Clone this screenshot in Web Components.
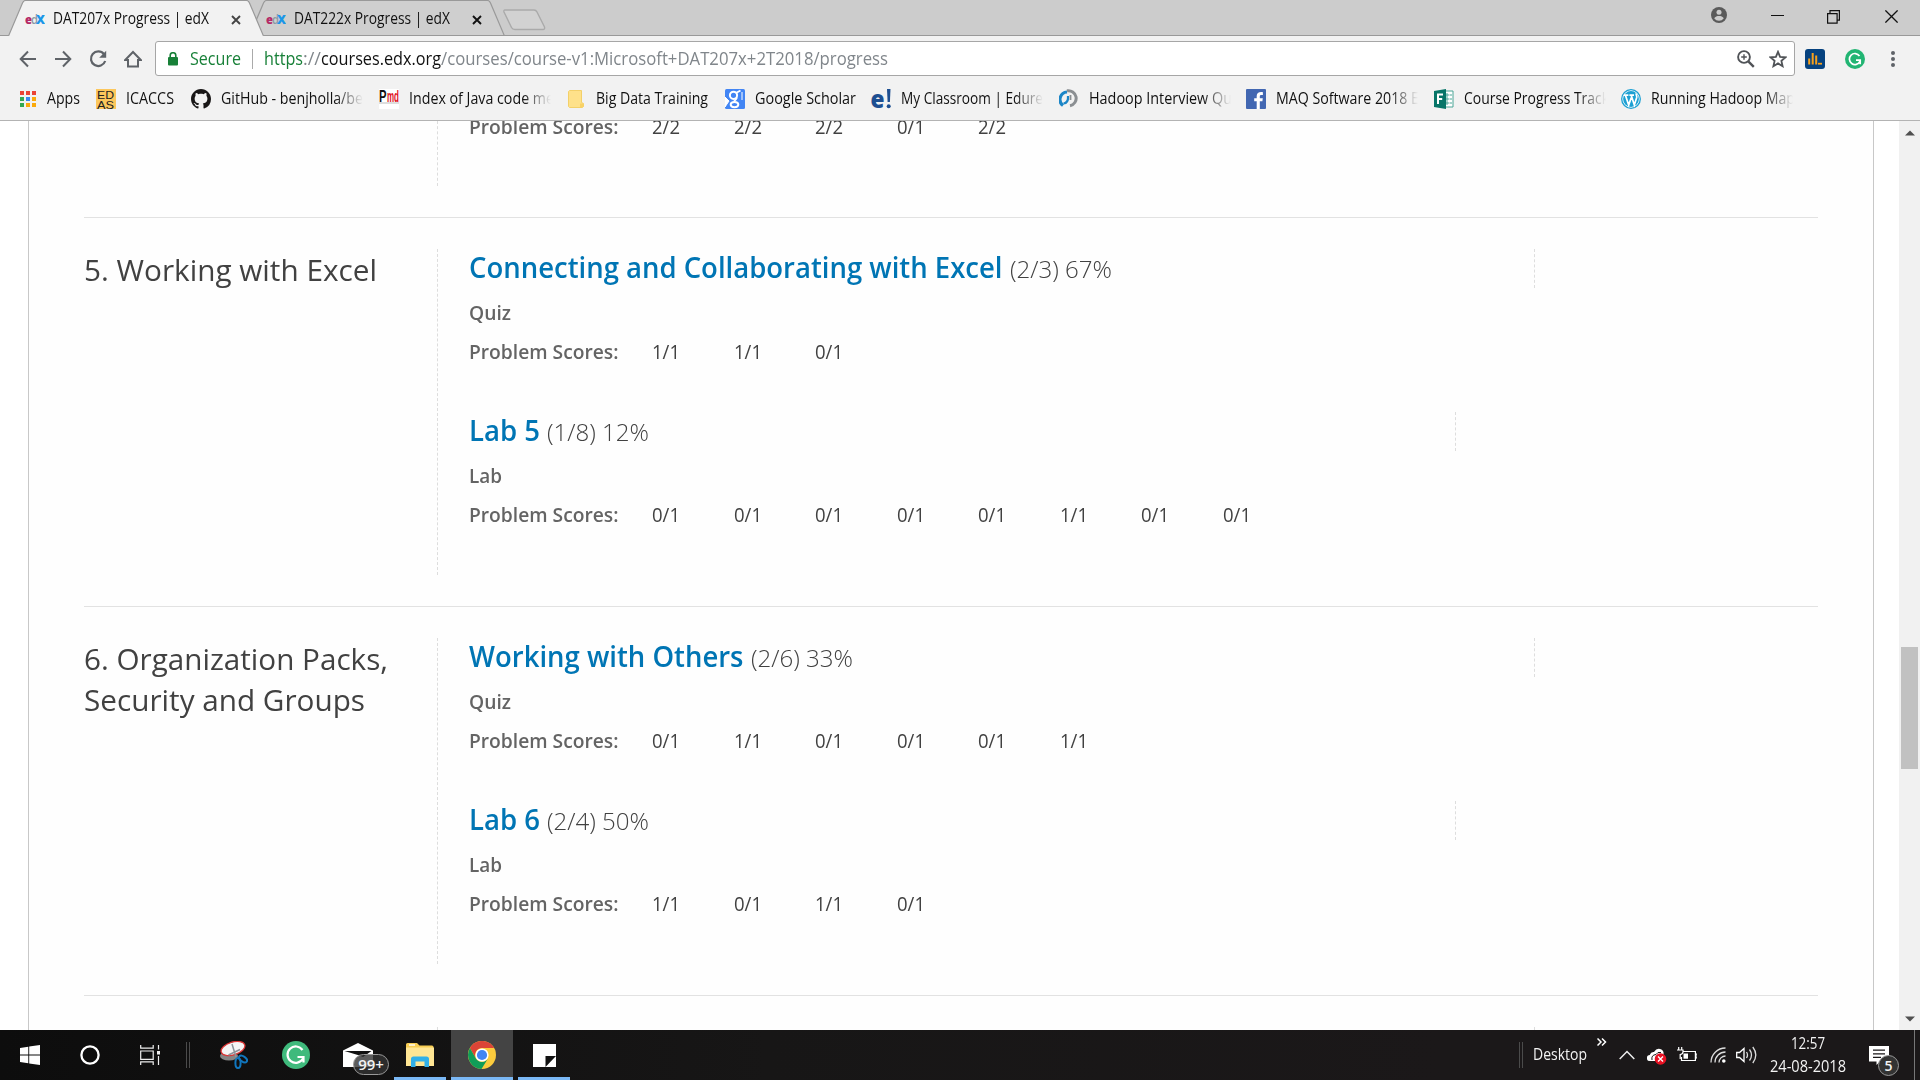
<!DOCTYPE html>
<html lang="en">
<head>
<meta charset="utf-8">
<title>DAT207x Progress | edX</title>
<style>
html,body{margin:0;height:100%;overflow:hidden;background:#fff}
body{font-family:"Open Sans","Noto Sans",sans-serif}
</style>
</head>
<body>
<app-screen></app-screen>
<script>
const make=(name,render)=>customElements.define(name,class extends HTMLElement{
  connectedCallback(){
    if(this.shadowRoot)return;
    this.attachShadow({mode:'open'}).innerHTML=render(this);
  }
});
const icons={
 edx:[20,12,`<text x="0" y="10.5" font-family="Open Sans" font-weight="800" font-size="12" fill="#b52a67" textLength="7" lengthAdjust="spacingAndGlyphs">e</text><text x="6" y="10.5" font-family="Open Sans" font-weight="600" font-size="12" fill="#8a9aa5" textLength="7" lengthAdjust="spacingAndGlyphs">d</text><text x="11" y="11" font-family="Open Sans" font-weight="800" font-size="13" fill="#1b96e8" textLength="9" lengthAdjust="spacingAndGlyphs">X</text>`],
 close:[10,10,`<path d="M1 1l8 8M9 1L1 9" stroke="currentColor" stroke-width="1.9" fill="none"/>`],
 back:[18,18,`<path d="M17 9H2M9 1.5L1.7 9 9 16.500" stroke="#5f6368" stroke-width="2" fill="none"/>`],
 fwd:[18,18,`<path d="M1 9h15M9 1.500L16.300 9 9 16.500" stroke="#5f6368" stroke-width="2" fill="none"/>`],
 reload:[18,18,`<path d="M15 4.200A7.300 7.300 0 1 0 16.200 11" stroke="#5f6368" stroke-width="2.200" fill="none"/><path d="M17.200.8v7H10.200z" fill="#5f6368"/>`],
 home:[18,18,`<path d="M1.200 10L9 2l7.800 8H14v6.500H4V10z" stroke="#5f6368" stroke-width="2" fill="none"/>`],
 lock:[10,14,`<rect y="5" width="10" height="8.500" rx="1" fill="#188038"/><path d="M2.200 6V3.500a2.800 2.800 0 0 1 5.600 0V6" stroke="#188038" stroke-width="1.600" fill="none"/>`],
 zoom:[18,18,`<circle cx="7" cy="7" r="5.900" stroke="#505357" stroke-width="1.900" fill="none"/><path d="M11.300 11.300l5.500 5.500" stroke="#505357" stroke-width="2.400"/><path d="M4.200 7h5.600M7 4.200v5.600" stroke="#505357" stroke-width="1.400"/>`],
 star:[18,18,`<path d="M9 1.800l2.100 5 5.400.5-4.100 3.600 1.200 5.300L9 13.400l-4.600 2.800 1.200-5.300L1.500 7.300l5.400-.5z" stroke="#505357" stroke-width="1.800" fill="none"/>`],
 stats:[20,20,`<rect width="20" height="20" rx="3" fill="#06427f"/><path d="M4.200 15.500V9.500M7.700 15.500V4M11.200 15.500V6.500" stroke="#f9a11b" stroke-width="2"/><path d="M13 14.700h4" stroke="#f9a11b" stroke-width="1.800"/>`],
 gram:[20,20,`<circle cx="10" cy="10" r="10" fill="#22b573"/><path d="M14.500 7A5.500 5.500 0 1 0 14.900 12.300M11 11.200h4.200v4" stroke="#fff" stroke-width="1.700" fill="none"/>`],
 dots:[4,18,`<g fill="#5f6368"><circle cx="2" cy="3" r="2"/><circle cx="2" cy="9" r="2"/><circle cx="2" cy="15" r="2"/></g>`],
 apps:[16,16,`<g fill="#ea4335"><path d="M0 0h4v4H0zM6 0h4v4H6zM12 0h4v4h-4z"/></g><path d="M0 6h4v4H0zM0 12h4v4H0z" fill="#34a853"/><path d="M6 6h4v4H6z" fill="#3b86f0"/><path d="M12 6h4v4h-4zM6 12h4v4H6zM12 12h4v4h-4z" fill="#fbaa0c"/>`],
 edas:[20,20,`<rect width="20" height="20" fill="#fcc75c"/><g font-family="Liberation Sans" font-size="11.500" fill="#222"><text x="1" y="9.500" textLength="17" lengthAdjust="spacingAndGlyphs">ED</text><text x="1" y="19.500" textLength="17" lengthAdjust="spacingAndGlyphs">AS</text></g>`],
 github:[20,20,`<path transform="scale(1.250)" fill="#191717" d="M8 0C3.580 0 0 3.580 0 8c0 3.540 2.290 6.530 5.470 7.590.4.070.55-.17.55-.38 0-.19-.01-.82-.01-1.490-2.010.37-2.530-.49-2.690-.94-.09-.23-.48-.94-.82-1.130-.28-.15-.68-.52-.01-.53.63-.01 1.080.58 1.230.82.72 1.210 1.870.87 2.330.66.07-.52.28-.87.51-1.070-1.780-.2-3.640-.89-3.640-3.950 0-.87.31-1.590.82-2.150-.08-.2-.36-1.020.08-2.120 0 0 .67-.21 2.200.82.64-.18 1.320-.27 2-.27s1.360.09 2 .27c1.530-1.040 2.200-.82 2.200-.82.44 1.100.16 1.920.08 2.120.51.56.82 1.270.82 2.150 0 3.070-1.870 3.750-3.650 3.950.29.25.54.73.54 1.480 0 1.070-.01 1.930-.01 2.200 0 .21.15.46.55.38A8.010 8.010 0 0 0 16 8c0-4.420-3.580-8-8-8z"/>`],
 pmd:[20,20,`<rect width="20" height="20" fill="#fff"/><g font-family="Liberation Sans" font-weight="bold"><text x="0" y="13" font-size="17" fill="#111" textLength="7.500" lengthAdjust="spacingAndGlyphs">P</text><text x="8" y="13" font-size="17" fill="#e01020" textLength="12" lengthAdjust="spacingAndGlyphs">md</text></g><path d="M0 14h20" stroke="#bbb"/>`],
 folder:[16,18,`<path d="M1.500.5h12v12l2 1v3l-1 1H1.500l-1-1V1.500z" fill="#fee18a" stroke="#f3d069"/><path d="M12 13.500h3.500v3.500H12z" fill="#f9d266"/>`],
 scholar:[20,20,`<rect width="20" height="20" rx="1.500" fill="#4285f4"/><g fill="none" stroke="#fff" stroke-width="2"><circle cx="8.500" cy="6.300" r="3.600"/><path d="M11 4l4.500-2.500M11.500 8.500c1 2-3 2.500-2 4.200"/><ellipse cx="9.500" cy="15.600" rx="3.800" ry="2.600"/></g><path d="M0 8l4 4-4 6zM17 3v8" stroke="#fff" fill="#fff"/>`],
 edureka:[20,20,`<text x="-.5" y="18.500" font-family="Open Sans" font-size="25" font-weight="800" fill="#1d4f91" textLength="14" lengthAdjust="spacingAndGlyphs">e</text><path d="M16 0h3.500l-.6 13h-2.300z" fill="#1d4f91"/><circle cx="17.700" cy="17.200" r="2" fill="#1d4f91"/>`],
 hadoop:[20,20,`<path d="M8 3A7.500 7.500 0 0 0 4 16.500" stroke="#1c86c7" stroke-width="3.200" fill="none"/><path d="M4.500 14.500Q9.500 14 9 7" stroke="#1c86c7" stroke-width="2.200" fill="none"/><path d="M8 1.800a7.600 7.600 0 1 1 3 15" stroke="#8b8f92" stroke-width="3" fill="none"/><path d="M11.500 6v5" stroke="#8b8f92" stroke-width="1.800"/>`],
 fb:[20,20,`<rect width="20" height="20" rx="1" fill="#4267b2"/><path d="M13.800 20v-7.700h2.600l.4-3h-3V7.400c0-.9.300-1.500 1.500-1.500h1.600V3.200c-3.800-.6-6.200.7-6.200 3.800v2.300H8.200v3h2.500V20z" fill="#fff"/>`],
 forms:[20,20,`<path d="M10 2h9v16h-9z" fill="#fff" stroke="#4aa596"/><path d="M12 5h2v2h-2zM12 9h2v2h-2zM12 13h2v2h-2zM15.500 6H18M15.500 10H18M15.500 14H18" stroke="#4aa596" fill="none"/><path d="M0 2l12-2v20L0 18z" fill="#077568"/><path d="M4 15V5.500h5M4 10h4.200" stroke="#fff" stroke-width="2" fill="none"/>`],
 wp:[20,20,`<circle cx="10" cy="10" r="9.300" fill="#fff" stroke="#1ca0d3" stroke-width="1.300"/><circle cx="10" cy="10" r="7.900" fill="#1ca0d3"/><path d="M2.800 6.200h4.600M8.400 6.200h4.600M4.500 6.500l3.200 9.500 2.600-7.500M10.300 6.500l3 9.500 2.400-7.600c.4-1.700-.8-2.300-.5-4" stroke="#fff" stroke-width="1.700" fill="none"/>`],
 user:[16,16,`<circle cx="8" cy="8" r="8" fill="#5a5a5a"/><circle cx="8" cy="5.200" r="2.500" fill="#ccc"/><path d="M3.200 11.300C4.300 9.600 6 9 8 9s3.700.6 4.800 2.300C11.500 13 10 13.800 8 13.800S4.500 13 3.200 11.300z" fill="#ccc"/>`],
 min:[13,13,`<path d="M0 5.500h13" stroke="#111" stroke-width="1"/>`],
 max:[13,14,`<path d="M.6 3.600h9.500v9.500H.6zM3 3.500V.6h9.400v9.500h-2.300" fill="none" stroke="#111" stroke-width="1.200"/>`],
 x:[13,13,`<path d="M.4.400l12.200 12.200M12.600.400L.4 12.600" stroke="#111" stroke-width="1.300"/>`],
 win:[20,20,`<path d="M0 2.900l8.300-1.200v7.800H0zM9.200 1.500L20 0v9.500H9.200zM0 10.500h8.300v7.800L0 17.100zM9.200 10.500H20V20L9.200 18.500z" fill="#fff"/>`],
 cortana:[20,20,`<circle cx="10" cy="10" r="8.600" stroke="#fff" stroke-width="2.300" fill="none"/>`],
 task:[20,20,`<path d="M.7 0v3.200h12.500V0M.7 20v-3.200h12.500V20M.7 6h12.500v8.300H.7z" stroke="#eee" stroke-width="1.200" fill="none"/><path d="M18.500 0v4.500M18.500 11v9" stroke="#eee" stroke-width="1.200"/><path d="M17 6h3v3.500h-3z" fill="#eee"/>`],
 snip:[28,28,`<ellipse cx="9" cy="15" rx="9" ry="4.500" fill="#858585"/><ellipse cx="13" cy="7.500" rx="12.300" ry="6.400" transform="rotate(-17 13 7.500)" fill="#f4f4f4" stroke="#dc3535" stroke-width="1.300"/><path d="M12 3l4 13M20 8.500L8.500 14" stroke="#8c9299" stroke-width="1.500"/><g fill="none" stroke="#1176bd" stroke-width="2"><ellipse cx="18" cy="22" rx="2.600" ry="5"/><ellipse cx="23" cy="18" rx="4.500" ry="2.600" transform="rotate(35 23 18)"/></g>`],
 gram2:[28,28,`<circle cx="14" cy="14" r="14" fill="#3fba7c"/><path d="M20.500 9A8.200 8.200 0 1 0 21 17.500M15.500 16h6v5.500" stroke="#fff" stroke-width="2.200" fill="none"/>`],
 mail:[30,24,`<path d="M0 7.500L15 0l15 7.500V24H0z" fill="#fff"/><path d="M1.500 8h27L20 14l-3.500-1.500z" fill="#111"/>`],
 explorer:[28,24,`<path d="M0 1.500Q0 0 1.500 0h9.500l2.500 2.500H26q1.500 0 1.500 1.500v18.500H0z" fill="#f7cd53"/><path d="M0 4.500h28V23H0z" fill="#ffe694"/><path d="M3 2h6" stroke="#fff" stroke-width="1.400"/><path d="M5 24v-8q0-2.500 2.500-2.500h13q2.500 0 2.500 2.500v8h-4.500v-5.500h-9V24z" fill="#31b0e8"/>`],
 chrome:[28,28,`<circle cx="14" cy="14" r="14" fill="#fbcb3d"/><path d="M1.900 7A14 14 0 0 1 26.200 7H14a7 7 0 0 0-6.100 10.400z" fill="#db4437"/><path d="M1.900 7A14 14 0 0 0 13.500 28l6.500-10.500A7 7 0 0 1 7.900 17.500z" fill="#0f9d58"/><circle cx="14" cy="14" r="6.600" fill="#fff"/><circle cx="14" cy="14" r="5.100" fill="#4285f4"/>`],
 sticky:[23,23,`<path d="M0 0h23v23H0z" fill="#fff"/><path d="M12.500 23V12H23z" fill="#111"/><path d="M13.500 23L23 13v10z" fill="#fff"/>`],
 more:[10,8,`<path d="M.5.500L4 4 .5 7.500M5 .500L8.500 4 5 7.500" stroke="#fff" stroke-width="1.500" fill="none"/>`],
 up:[16,10,`<path d="M.7 9L8 1.500 15.300 9" stroke="#eee" stroke-width="1.500" fill="none"/>`],
 cloud:[20,17,`<path d="M3 13a3 3 0 0 1-.3-6Q4 3.500 7 4q3-5 7.500-2.500 2.500 1.500 2 4V13z" fill="#fff"/><path d="M5 12q-1-5 4-5.500 1.500-3 5-2" stroke="#1a1718" fill="none"/><circle cx="13.500" cy="11" r="5.800" fill="#e81123"/><path d="M11 8.500l5 5M16 8.500l-5 5" stroke="#fff" stroke-width="1.300"/>`],
 battery:[20,16,`<path d="M6 4.500h12.400v9H4.500V10M18.500 7H20v4h-1.500" stroke="#fff" stroke-width="1.200" fill="none"/><path d="M6.500 6.500H11v5.200H6.500z" fill="#fff"/><path d="M1.700 0v3M4.700 0v3M0 3h6v2q0 2-2.800 2.500V12" stroke="#fff" stroke-width="1.200" fill="none"/>`],
 wifi:[16,16,`<g fill="none" stroke="#ddd" stroke-width="1.300"><path d="M1 15.500A14.500 14.500 0 0 1 15.500 1M5 15.500A10.500 10.500 0 0 1 15.500 5M9 15.500A6.500 6.500 0 0 1 15.500 9"/></g><circle cx="13.800" cy="14" r="1.800" fill="#fff"/>`],
 sound:[21,18,`<path d="M.7 6.500h2.800L8 2.500v13L3.500 11.500H.7z" fill="none" stroke="#fff" stroke-width="1.300"/><path d="M10.500 6q2 3 0 6M13.500 3.500q4 5.500 0 11M16.800 1q6 8 0 16" fill="none" stroke="#ddd" stroke-width="1.300"/>`],
 note:[20,19,`<path d="M0 0h20v15.500H11L7.500 19v-3.500H0z" fill="#fff"/><path d="M4 4.200h12M4 7.800h12M4 11.300h8" stroke="#1a1718" stroke-width="1.200"/>`]
};
make('ui-icon',el=>{
  const [w,h,body]=icons[el.getAttribute('name')];
  return `<style>:host{display:block;flex:none;width:${w}px;height:${h}px}svg{display:block}</style><svg width="${w}" height="${h}" viewBox="0 0 ${w} ${h}">${body}</svg>`;
});

make('browser-tab',el=>{
  const on=el.hasAttribute('active');
  return `<style>
  :host{display:grid;flex:none;width:256px;height:36px;z-index:${on?2:1};color:${on?'#444':'#111'};margin-right:-15px}
  svg,.row{grid-area:1/1}
  .row{display:flex;align-items:center;padding:3px 0 0 17px;height:33px}
  ui-icon[name=edx]{margin-top:-1px}
  fit-text{margin:-3px 22px 0 8px;color:#111;font-size:15.500px;flex:none}
  </style><svg width="256" height="36"><path d="M.5 36L14.500 3q1-2.500 3-2.500h221q2 0 3 2.500L255.500 36" fill="${on?'#f2f2f2':'#cfcfcf'}" stroke="#999" stroke-width="1.200"/>${on?'':'<path d="M0 35.500h256" stroke="#999"/>'}</svg>
  <div class="row"><ui-icon name="edx"></ui-icon><fit-text w="156"><slot></slot></fit-text><ui-icon name="close"></ui-icon></div>`;
});
make('tab-strip',()=>`<style>
  :host{display:flex;height:36px;background:#ccc;box-shadow:inset 0 -1px #999}
  .tabs{display:flex;padding-left:8px;flex:1}
  .new{display:block;margin:9px 0 0 13px}
  .ctl{display:flex;align-items:flex-start;padding:9px 22px 0 0}
  ui-icon{margin-left:43px;margin-top:1px}ui-icon[name=user]{margin:-2px 8px 0 0}
  </style><div class="tabs"><browser-tab active>DAT207x Progress | edX</browser-tab><browser-tab>DAT222x Progress | edX</browser-tab>
  <svg class="new" width="43" height="22"><path d="M2 1h29q2 0 3 2l7.500 15q.5 2.500-1.500 2.500H12q-2.500 0-3.500-2L1 3Q.5 1 2 1z" fill="#d2d2d2" stroke="#aaa" stroke-width="1.400"/></svg></div>
  <div class="ctl"><ui-icon name="user"></ui-icon><ui-icon name="min" style="margin-left:36px"></ui-icon><ui-icon name="max"></ui-icon><ui-icon name="x" style="margin-left:45px"></ui-icon></div>`);
make('address-bar',()=>`<style>
  :host{display:flex;align-items:center;height:35px;padding:5px 25px 0 19px}
  .nav{display:flex;gap:17px;width:136px}
  .box{display:flex;align-items:center;width:1638px;height:33px;border:1px solid #a6a6a6;border-radius:3px;background:#fff;font-size:18px;box-sizing:content-box}
  .box ui-icon[name=lock]{margin:0 12px}
  fit-text{flex:none;line-height:30px;margin-top:-2px}
  .sec{color:#188038}.bar{width:1px;height:20px;background:#aaa;margin:0 11px 0 11px}
  .url{color:#80868b}.g{color:#188038}.b{color:#111}
  .end{margin-left:auto;display:flex;gap:14px;padding-right:7px}
  .ext{display:flex;align-items:center;margin-left:10px;gap:20px}.ext ui-icon[name=dots]{margin-left:6px}
  </style>
  <div class="nav"><ui-icon name="back"></ui-icon><ui-icon name="fwd"></ui-icon><ui-icon name="reload"></ui-icon><ui-icon name="home"></ui-icon></div>
  <div class="box"><ui-icon name="lock"></ui-icon><fit-text class="sec" w="51">Secure</fit-text><span class="bar"></span><fit-text class="url g" w="39">https</fit-text><fit-text class="url" w="18">://</fit-text><fit-text class="b" w="120">courses.edx.org</fit-text><fit-text class="url" w="447">/courses/course-v1:Microsoft+DAT207x+2T2018/progress</fit-text>
  <div class="end"><ui-icon name="zoom"></ui-icon><ui-icon name="star"></ui-icon></div></div>
  <div class="ext"><ui-icon name="stats"></ui-icon><ui-icon name="gram"></ui-icon><ui-icon name="dots"></ui-icon></div>`);
make('book-mark',el=>{
  const a=n=>el.getAttribute(n);
  return `<style>:host{display:flex;align-items:center;flex:none;gap:${a('gap')||11}px;width:${a('cell')}px;font-size:15.500px;color:#111}
  .t{width:${a('clip')||a('w')}px;overflow:hidden;white-space:nowrap;line-height:24px;margin-top:-1px;${a('clip')?'-webkit-mask-image:linear-gradient(90deg,#000 calc(100% - 28px),transparent)':''}}</style>
  <ui-icon name="${a('icon')}"></ui-icon><div class="t"><fit-text w="${a('w')}"><slot></slot></fit-text></div>`;
});
make('bookmark-bar',()=>`<style>:host{display:flex;align-items:center;height:44px;padding:0 0 3px 20px;box-sizing:border-box}</style>
  <book-mark icon="apps" cell="76" gap="11" w="33">Apps</book-mark>
  <book-mark icon="edas" cell="95" gap="10" w="48">ICACCS</book-mark>
  <book-mark icon="github" cell="188" gap="10" w="142" clip="142">GitHub - benjholla/be</book-mark>
  <book-mark icon="pmd" cell="189" gap="10" w="145" clip="142">Index of Java code me</book-mark>
  <book-mark icon="folder" cell="157" gap="12" w="112">Big Data Training</book-mark>
  <book-mark icon="scholar" cell="146" gap="10" w="101">Google Scholar</book-mark>
  <book-mark icon="edureka" cell="188" gap="10" w="142" clip="142">My Classroom | Edure</book-mark>
  <book-mark icon="hadoop" cell="187" gap="10" w="143" clip="142">Hadoop Interview Qu</book-mark>
  <book-mark icon="fb" cell="188" gap="10" w="143" clip="142">MAQ Software 2018 E</book-mark>
  <book-mark icon="forms" cell="187" gap="10" w="145" clip="142">Course Progress Track</book-mark>
  <book-mark icon="wp" cell="180" gap="10" w="144" clip="142">Running Hadoop Map</book-mark>`);
make('browser-chrome',()=>`<style>:host{display:block;height:120px;background:#f2f2f2;border-bottom:1px solid #b3b3b3}</style><tab-strip></tab-strip><address-bar></address-bar><bookmark-bar style="margin-top:2px"></bookmark-bar>`);

make('problem-scores',el=>`<style>
  :host{display:flex;height:26px;line-height:26px;font-size:20px;color:#414141}
  b{font-weight:600;color:#646464;width:183px}span{width:81.500px}</style>
  <b><fit-text w="149.500">Problem Scores:</fit-text></b>${el.getAttribute('scores').split(' ').map(s=>`<span><fit-text w="28">${s}</fit-text></span>`).join('')}`);
make('graded-item',el=>{
  const a=n=>el.getAttribute(n);
  return `<style>
  :host{display:block;height:163px}
  h3{display:flex;box-sizing:border-box;width:${a('kind')=='Quiz'?1066:987}px;height:39px;margin:0;line-height:36px;font-size:28px;font-weight:600;color:#0075b4;border-right:1px dashed #ddd}
  .s{margin-left:7px;font-size:24px;font-weight:300;color:#414141;line-height:39px}
  p{margin:12px 0 13px;height:26px;line-height:26px;font-size:20px;font-weight:600;color:#646464}
  </style><h3><fit-text w="${a('tw')}"><slot></slot></fit-text><fit-text class="s" w="102">${a('score')}</fit-text></h3><p><fit-text w="${a('kind')=='Quiz'?42:33}">${a('kind')}</fit-text></p><problem-scores scores="${a('scores')}"></problem-scores>`;
});
make('course-chapter',()=>`<style>
  :host{display:flex;border-top:1px solid #e2e2e2;padding:31px 0}
  .h{width:353px;font-size:30px;line-height:41px;color:#414141}
  .c{flex:1;border-left:1px dashed #ddd;padding-left:31px}</style><div class="h"><slot name="heading"></slot></div><div class="c"><slot></slot></div>`);
make('chapter-tail',()=>`<style>
  :host{display:flex;height:65px;margin-bottom:31px;overflow:hidden}
  div{margin-left:353px;flex:1;border-left:1px dashed #ddd;padding-left:31px}
  problem-scores{margin-top:-7px}</style><div><problem-scores scores="2/2 2/2 2/2 0/1 2/2"></problem-scores></div>`);
make('scroll-bar',()=>`<style>:host{display:flex;flex-direction:column;align-items:center;width:21px;background:#f1f1f1}
  i{width:17px;height:122px;background:#c1c1c1;margin-top:511px}svg{display:block;margin-top:9px}svg+i+svg{margin:auto 0 8px}</style>
  <svg width="10" height="6"><path d="M0 5.500L5 .500l5 5z" fill="#505050"/></svg><i></i><svg width="10" height="6"><path d="M0 .500l5 5 5-5z" fill="#505050"/></svg>`);
make('progress-page',()=>`<style>
  :host{display:flex;height:909px;overflow:hidden;background:#fff}
  main{width:1734px;margin-left:28px;margin-right:25px;padding:0 55px;border:solid #c8c8c8;border-width:0 1px;background:#fefefe}
  .col{display:flex;flex-direction:column;align-items:flex-start}</style>
  <main><chapter-tail></chapter-tail>
  <course-chapter><div slot="heading" class="col"><fit-text w="293">5. Working with Excel</fit-text></div>
   <graded-item kind="Quiz" tw="533.500" score="(2/3) 67%" scores="1/1 1/1 0/1">Connecting and Collaborating with Excel</graded-item>
   <graded-item kind="Lab" tw="71" score="(1/8) 12%" scores="0/1 0/1 0/1 0/1 0/1 1/1 0/1 0/1">Lab 5</graded-item></course-chapter>
  <course-chapter><div slot="heading" class="col"><fit-text w="304">6. Organization Packs,</fit-text><fit-text w="281">Security and Groups</fit-text></div>
   <graded-item kind="Quiz" tw="274.500" score="(2/6) 33%" scores="0/1 1/1 0/1 0/1 0/1 1/1">Working with Others</graded-item>
   <graded-item kind="Lab" tw="71" score="(2/4) 50%" scores="1/1 0/1 1/1 0/1">Lab 6</graded-item></course-chapter>
  <course-chapter><div style="width:1065px;height:39px;border-right:1px dashed #ddd"></div></course-chapter>
  </main><scroll-bar></scroll-bar>`);
make('task-button',el=>`<style>:host{display:grid;place-items:center;flex:none;width:${el.getAttribute('w')||62}px;height:50px;box-sizing:border-box}
  :host([open]){background:linear-gradient(#7ab8f5,#7ab8f5) 50% 100%/52px 3px no-repeat}
  :host([active]){background:linear-gradient(#7ab8f5,#7ab8f5) 50% 100%/100% 3px no-repeat,#444}
  ui-icon{margin-top:${el.getAttribute('dy')||0}px}</style><ui-icon name="${el.getAttribute('icon')}"></ui-icon><slot></slot>`);
make('task-bar',()=>`<style>
  :host{display:flex;height:50px;background:linear-gradient(90deg,#0d0d0d,#171616 40%,#1b1819 75%);color:#f3f3f3;font-size:16px}
  .sep{width:2px;height:26px;margin:12px 13px 0 6px;border:solid #4b4b4b;border-width:0 1px}
  .mail{position:relative}.badge{position:absolute;right:0;bottom:5px;width:34px;height:19px;border:1px solid #999;border-radius:11px;background:#333c;font-size:15px;line-height:19px;font-weight:600;text-align:center}
  .tray{margin-left:auto;display:flex;align-items:center;padding-right:5px;border-right:0}
  .clock{display:flex;flex-direction:column;align-items:center;width:78px;line-height:23px;margin:-1px 22px 0 12px}
  .n{position:relative;width:45px;height:19px}.five{position:absolute;left:9px;top:9px;width:19px;height:19px;border:1px solid #999;border-radius:50%;background:#333;font-size:14px;line-height:19px;font-weight:600;text-align:center}
  .line{width:1px;height:50px;background:#777}
  </style>
  <task-button w="60" icon="win"></task-button><task-button w="60" icon="cortana"></task-button><task-button w="60" icon="task"></task-button><span class="sep"></span>
  <task-button icon="snip"></task-button><task-button icon="gram2"></task-button><div class="mail"><task-button icon="mail"></task-button><span class="badge">99+</span></div>
  <task-button open icon="explorer"></task-button><task-button active icon="chrome"></task-button><task-button open icon="sticky"></task-button>
  <div class="tray"><span class="sep" style="margin:0 10px 0 0"></span><fit-text w="54" style="margin-top:-2px">Desktop</fit-text><ui-icon name="more" style="margin:-27px 12px 0 10px"></ui-icon><ui-icon name="up"></ui-icon><ui-icon name="cloud" style="margin:2px 10px 0 12px"></ui-icon><ui-icon name="battery"></ui-icon><ui-icon name="wifi" style="margin:0 10px 0 13px"></ui-icon><ui-icon name="sound"></ui-icon>
  <div class="clock"><fit-text w="34">12:57</fit-text><fit-text w="76">24-08-2018</fit-text></div>
  <div class="n"><ui-icon name="note"></ui-icon><span class="five">5</span></div><span class="line"></span></div>`);
make('app-screen',()=>`<style>:host{display:flex;flex-direction:column;width:1920px;height:1080px;overflow:hidden}</style><browser-chrome></browser-chrome><progress-page></progress-page><task-bar></task-bar>`);

/* Holds a line of text at a set width; defined last so every host around it is styled when it measures. */
customElements.define('fit-text',class extends HTMLElement{
  connectedCallback(){
    if(this.shadowRoot)return;
    const w=+this.getAttribute('w');
    this.attachShadow({mode:'open'}).innerHTML=`<style>:host{display:inline-block;width:${w}px;white-space:nowrap}span{display:inline-block;transform-origin:0 50%}</style><span><slot></slot></span>`;
    const s=this.shadowRoot.querySelector('span');
    const n=s.getBoundingClientRect().width;
    if(n)s.style.transform=`scaleX(${w/n})`;
  }
});
</script>
</body>
</html>
